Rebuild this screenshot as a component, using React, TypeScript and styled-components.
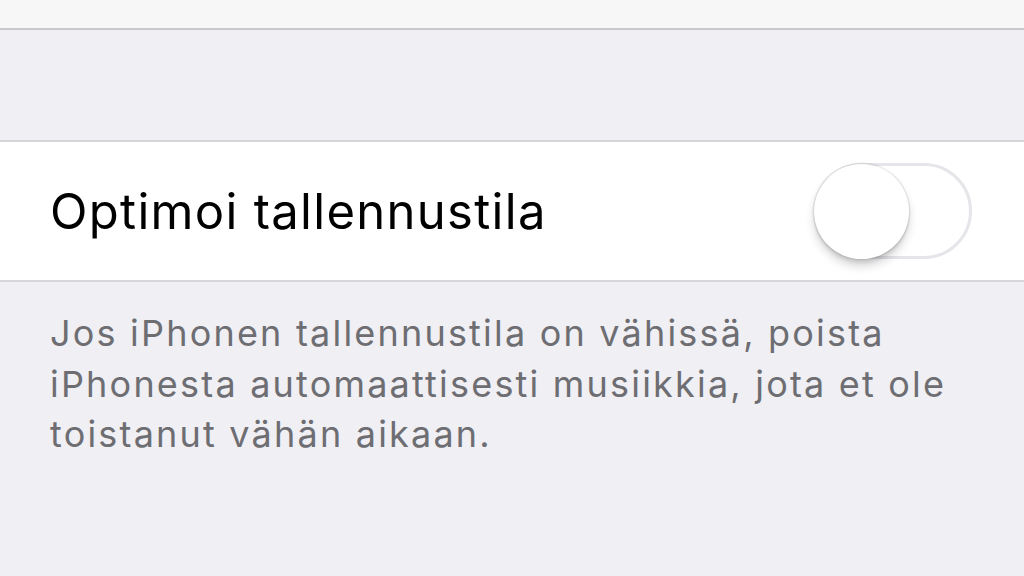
import React from 'react';
import styled, { createGlobalStyle } from 'styled-components';

const GlobalStyle = createGlobalStyle`
  html, body {
    margin: 0;
    padding: 0;
    background: #efeff4;
  }
  body {
    font-family: Inter, "Noto Sans", sans-serif;
    -webkit-font-smoothing: antialiased;
  }
`;

const Screen = styled.div`
  width: 1024px;
  height: 576px;
  overflow: hidden;
  display: flex;
  flex-direction: column;
  background: #efeff4;
`;

const TopBar = styled.div`
  height: 28px;
  background: #f7f7f8;
  border-bottom: 2px solid #c8c7cc;
`;

const Spacer = styled.div`
  height: 110px;
`;

const Cell = styled.div`
  height: 138px;
  background: #ffffff;
  border-top: 2px solid #d6d5da;
  border-bottom: 2px solid #d6d5da;
  display: flex;
  align-items: center;
  justify-content: space-between;
  padding: 0 52px 0 50px;
`;

const Label = styled.span`
  font-size: 49px;
  color: #000000;
  letter-spacing: 1.3px;
`;

const Track = styled.div<{ $on: boolean }>`
  position: relative;
  width: 158px;
  height: 96px;
  box-sizing: border-box;
  border-radius: 48px;
  border: 3px solid ${p => (p.$on ? '#4cd964' : '#e5e5ea')};
  background: ${p => (p.$on ? '#4cd964' : '#ffffff')};
`;

const Knob = styled.div<{ $on: boolean }>`
  position: absolute;
  top: -2px;
  left: ${p => (p.$on ? '59px' : '-3px')};
  width: 95px;
  height: 95px;
  border-radius: 50%;
  background: #ffffff;
  box-shadow: 0 7px 10px rgba(0, 0, 0, 0.16), 0 0 0 1.5px rgba(0, 0, 0, 0.07),
    0 4px 3px rgba(0, 0, 0, 0.07);
`;

const Footer = styled.p`
  margin: 0;
  padding: 26px 40px 0 50px;
  font-size: 36px;
  line-height: 50.5px;
  letter-spacing: 2.2px;
  color: #6d6d72;
  white-space: nowrap;
`;

export default function App() {
  const [on, setOn] = React.useState(false);
  return (
    <Screen>
      <GlobalStyle />
      <TopBar />
      <Spacer />
      <Cell>
        <Label>Optimoi tallennustila</Label>
        <Track $on={on} onClick={() => setOn(!on)}>
          <Knob $on={on} />
        </Track>
      </Cell>
      <Footer>
        Jos iPhonen tallennustila on vähissä, poista
        <br />
        iPhonesta automaattisesti musiikkia, jota et ole
        <br />
        toistanut vähän aikaan.
      </Footer>
    </Screen>
  );
}
